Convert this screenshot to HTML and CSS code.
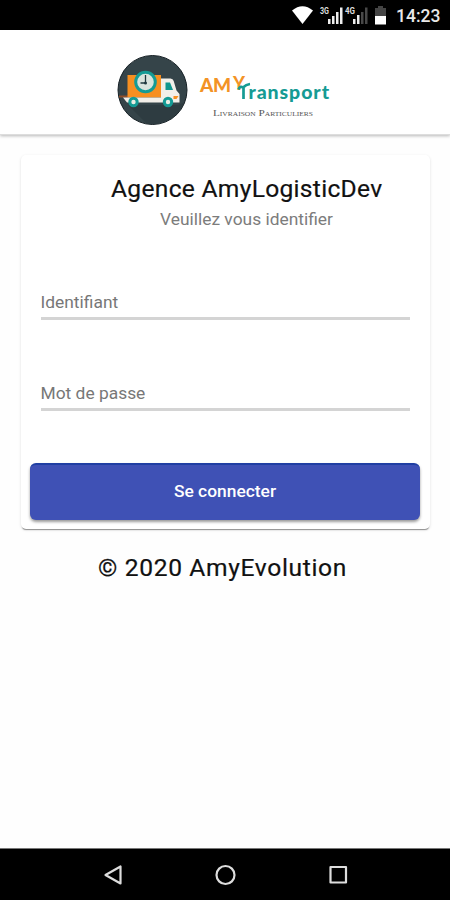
FILE: index.html
```html
<!DOCTYPE html>
<html lang="fr">
<head>
<meta charset="utf-8">
<title>AmyTransport</title>
<link rel="stylesheet" href="styles.css">
</head>
<body>
<div class="status">
  <svg class="status-icons" width="104" height="30" viewBox="0 0 104 30">
    <path d="M1 10.5Q11.500 2 22 10.500L11.500 24Z" fill="#fff"/>
    <g fill="#ddd" font-family="Roboto, sans-serif" font-size="8.5" font-weight="700">
      <text x="29" y="14" textLength="9" lengthAdjust="spacingAndGlyphs">3G</text>
      <text x="54" y="14" textLength="10" lengthAdjust="spacingAndGlyphs">4G</text>
    </g>
    <path d="M37 19h2.500v5H37zM41 16h2.500v8H41zM45 12h2.500v12H45zM49 7.500h2.500V24H49zM62 19h2.500v5H62zM66 15h2.500v9H66z" fill="#eee"/>
    <path d="M70 12h2.500v12H70zM74 7.500h2.500V24H74z" fill="#484848"/>
    <path d="M84 8h3V6h5v2h3v9H84z" fill="#444"/>
    <path d="M84 16h11v8.500H84z" fill="#fff"/>
  </svg>
  <span class="clock">14:23</span>
</div>
<header class="header">
  <svg class="logo" width="220" height="74" viewBox="115 52 220 74">
    <clipPath id="disc"><circle cx="152.500" cy="90" r="34"/></clipPath>
    <circle cx="152.500" cy="90" r="34.500" fill="#354449" stroke="#172126" stroke-width="1"/>
    <path clip-path="url(#disc)" d="M128 105h50l14-6v28h-42z" fill="#2e3c41"/>
    <path d="M119 95.500h9v2h-9z" fill="#914f2a"/>
    <path d="M127.500 75H161v22.500h-33.500z" fill="#f78f20"/>
    <path d="M123 97.500h38V78.500h9.500q2.500 0 3.200 2.500l2.800 9.500 3 3.500v8.500H127z" fill="#f3efe9"/>
    <path d="M165.500 82.500h4.500l3 7.500h-7.500z" fill="#11978f"/>
    <path d="M173.500 96h5l-2 3h-3z" fill="#f78f20"/>
    <g fill="#e9eee4" stroke="#159b95" stroke-width="3">
      <circle cx="133.500" cy="102" r="3.700"/><circle cx="168" cy="102" r="3.700"/>
      <circle cx="145.500" cy="82" r="9.800" fill="#d9e4dd"/>
    </g>
    <path d="M145.500 75V83h-5" fill="none" stroke="#213a40" stroke-width="1.300"/>
    <circle cx="145.500" cy="83" r="1.500" fill="#213a40"/>
    <text class="amy" x="200" y="91.500" textLength="31" lengthAdjust="spacing">AM</text>
    <text class="amy amy-y" x="233" y="90" textLength="12" lengthAdjust="spacingAndGlyphs">Y</text>
    <text class="transport" x="248.500" y="99" textLength="80.500" lengthAdjust="spacing">ransport</text>
    <path d="M238.500 89.500Q240 85.500 243 87.500Q246 84.500 250 84M243.500 86.500V99" fill="none" stroke="#169b94" stroke-width="2.700"/>
    <text class="tagline" x="213" y="116" textLength="100" lengthAdjust="spacingAndGlyphs">Livraison Particuliers</text>
  </svg>
</header>
<main class="main">
  <form class="card">
    <h1 class="title">Agence AmyLogisticDev</h1>
    <p class="subtitle">Veuillez vous identifier</p>
    <div class="field">Identifiant</div>
    <div class="field second">Mot de passe</div>
    <div class="button">Se connecter</div>
  </form>
  <p class="copyright">© 2020 AmyEvolution</p>
</main>
<nav class="nav">
  <svg width="24" height="24" viewBox="0 0 24 24"><path d="M5.500 12 20.500 3.500v17z"/></svg>
  <svg width="24" height="24" viewBox="0 0 24 24"><circle cx="12.500" cy="12" r="9"/></svg>
  <svg width="24" height="24" viewBox="0 0 24 24"><path d="M4.500 4h15.500v15.500H4.500z"/></svg>
</nav>
</body>
</html>
```
FILE: styles.css
```css
* { box-sizing: border-box; }
body {
  margin: 0;
  height: 900px;
  display: flex;
  flex-direction: column;
  background: #fefefe;
  font-family: Roboto, sans-serif;
  color: #111;
  overflow: hidden;
}
h1, p { margin: 0; font-weight: 400; }
svg { display: block; }
.status {
  height: 30px;
  background: #000;
  color: #e8e8e8;
  display: flex;
  align-items: center;
  justify-content: flex-end;
  padding-right: 8px;
}
.status-icons { flex: none; margin-right: 1px; }
.clock {
  width: 46px;
  font-size: 17.5px;
  font-weight: 500;
  line-height: 30px;
  padding-top: 2px;
}
.header {
  height: 105px;
  padding: 22px 0 0 115px;
  background: #fff;
  border-bottom: 1px solid #ddd;
  box-shadow: 0 1px 3px rgba(0, 0, 0, .28);
}
.amy { font: 900 19px Lato, sans-serif; fill: #f39325; }
.amy-y { font-size: 18px; }
.transport { font: 900 19.5px Lato, sans-serif; fill: #169b94; }
.tagline { font: small-caps 9px "Liberation Serif", serif; fill: #555; }
.main { flex: 1; padding: 20px 20px 0 21px; }
.card {
  height: 374px;
  padding: 19px 10px 0 9px;
  background: #fff;
  border-radius: 5px;
  box-shadow: 0 2px 1px -1px rgba(0, 0, 0, .38), 0 1px 3px rgba(0, 0, 0, .13);
}
.title {
  padding-left: 81px;
  font-size: 24.6px;
  line-height: 30px;
  letter-spacing: .29px;
  white-space: nowrap;
  -webkit-text-stroke: .2px #111;
}
.subtitle {
  padding-left: 130px;
  margin-top: 4px;
  font-size: 17.4px;
  line-height: 22px;
  color: #7c7c7c;
  white-space: nowrap;
}
.field {
  height: 30px;
  margin: 60px 10px 0 10.5px;
  border-bottom: 3px solid #d4d4d4;
  font-size: 17.4px;
  line-height: 24px;
  color: #777;
}
.second { margin-top: 61px; }
.button {
  height: 57px;
  margin-top: 52px;
  border-radius: 6px;
  background: #3f51b5;
  border-top: 2px solid #203fa3;
  box-shadow: 0 2px 3px rgba(0, 0, 0, .4);
  color: #fff;
  font-size: 17.4px;
  font-weight: 500;
  line-height: 52px;
  text-align: center;
}
.copyright {
  margin-top: 24px;
  padding-left: 77px;
  font-size: 24.6px;
  line-height: 30px;
  letter-spacing: .65px;
  white-space: nowrap;
  -webkit-text-stroke: .2px #111;
}
.nav {
  height: 52px;
  padding: 0 100px;
  background: #000;
  border-top: 1px solid #777;
  display: flex;
  align-items: center;
  justify-content: space-between;
}
.nav svg { fill: none; stroke: #ddd; stroke-width: 2.2; stroke-linejoin: round; }
```
